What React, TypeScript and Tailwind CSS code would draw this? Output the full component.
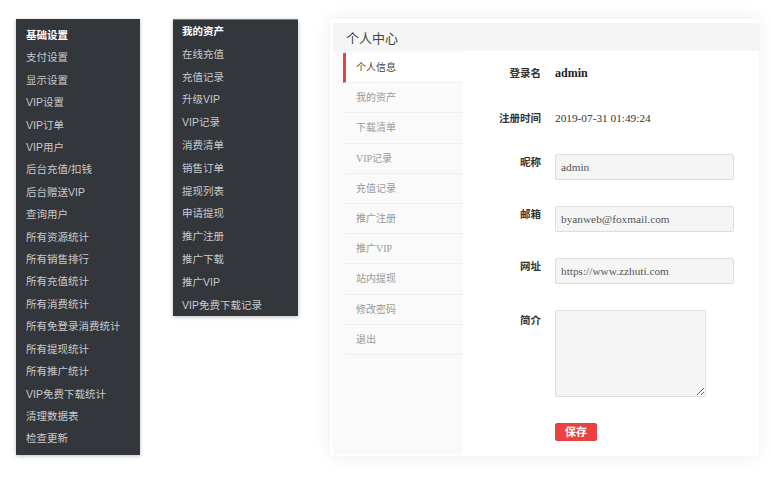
const adminMenu = [
  "基础设置",
  "支付设置",
  "显示设置",
  "VIP设置",
  "VIP订单",
  "VIP用户",
  "后台充值/扣钱",
  "后台赠送VIP",
  "查询用户",
  "所有资源统计",
  "所有销售排行",
  "所有充值统计",
  "所有消费统计",
  "所有免登录消费统计",
  "所有提现统计",
  "所有推广统计",
  "VIP免费下载统计",
  "清理数据表",
  "检查更新",
];

const assetMenu = [
  "我的资产",
  "在线充值",
  "充值记录",
  "升级VIP",
  "VIP记录",
  "消费清单",
  "销售订单",
  "提现列表",
  "申请提现",
  "推广注册",
  "推广下载",
  "推广VIP",
  "VIP免费下载记录",
];

const userMenu = [
  "个人信息",
  "我的资产",
  "下载清单",
  "VIP记录",
  "充值记录",
  "推广注册",
  "推广VIP",
  "站内提现",
  "修改密码",
  "退出",
];

const serif = "font-['Liberation_Serif','Noto_Sans_CJK_SC',serif]";

export default function App() {
  return (
    <div className="min-h-[482px] w-[771px] bg-white font-['Liberation_Sans','Noto_Sans_CJK_SC',sans-serif]">
      <div className="flex items-start pl-[16px] pt-[19px]">
        {/* admin menu */}
        <div className="w-[124px] bg-[#33363b] py-[5px] pl-[10px] shadow-[0_1px_4px_rgba(0,0,0,0.25)]">
          {adminMenu.map((item, i) => (
            <div
              key={i}
              className={`text-[10.5px] leading-[22.4px] ${
                i === 0 ? "font-bold text-white" : "text-[#c9cacc]"
              }`}
            >
              {item}
            </div>
          ))}
        </div>

        {/* assets menu */}
        <div className="ml-[33px] w-[125px] border-t border-[#3a8fd6] bg-[#33363b] pl-[9px] shadow-[0_1px_4px_rgba(0,0,0,0.25)]">
          {assetMenu.map((item, i) => (
            <div
              key={i}
              className={`text-[10.5px] leading-[22.8px] ${
                i === 0 ? "font-bold text-white" : "text-[#c9cacc]"
              }`}
            >
              {item}
            </div>
          ))}
        </div>

        {/* user center */}
        <div className={`ml-[32px] flex h-[437px] w-[429px] flex-col bg-white pl-[3px] pt-[4px] pb-[1px] shadow-[0_0_16px_rgba(0,0,0,0.08)] ${serif}`}>
          <div className="flex h-[28px] items-center bg-[#f5f5f5] pl-[13px] pt-[2px] font-['Noto_Sans_CJK_SC',sans-serif] text-[13px] text-[#444]">
            个人中心
          </div>

          <div className="flex flex-1">
            <div className="w-[130px] bg-[#fafafa] pl-[10px] pt-[2px]">
              {userMenu.map((item, i) => (
                <div
                  key={i}
                  className={`flex h-[30.2px] items-center border-b border-[#efefef] text-[10px] ${
                    i === 0
                      ? "border-l-[3px] border-l-[#e8403f] bg-white pl-[10px] text-[#444]"
                      : "ml-[2px] pl-[11px] text-[#999]"
                  }`}
                >
                  {item}
                </div>
              ))}
            </div>

            <div className="flex flex-1 flex-col pt-[12px]">
              <div className="flex h-[20px] items-center">
                <div className="w-[78px] text-right font-['Noto_Sans_CJK_SC',sans-serif] text-[10.5px] font-bold text-[#333]">
                  登录名
                </div>
                <div className="ml-[14px] text-[12px] font-bold text-[#222]">admin</div>
              </div>

              <div className="mt-[25px] flex h-[20px] items-center">
                <div className="w-[78px] text-right font-['Noto_Sans_CJK_SC',sans-serif] text-[10.5px] font-bold text-[#333]">
                  注册时间
                </div>
                <div className="ml-[14px] text-[11.3px] text-[#333]">2019-07-31 01:49:24</div>
              </div>

              {[
                ["昵称", "admin"],
                ["邮箱", "byanweb@foxmail.com"],
                ["网址", "https://www.zzhuti.com"],
              ].map(([label, value]) => (
                <div key={label} className="mt-[26px] flex items-start">
                  <div className="w-[78px] text-right font-['Noto_Sans_CJK_SC',sans-serif] text-[10.5px] font-bold leading-[16px] text-[#333]">
                    {label}
                  </div>
                  <input
                    readOnly
                    defaultValue={value}
                    className="ml-[14px] h-[26px] w-[179px] rounded-[2px] border border-[#dedede] bg-[#f5f5f5] px-[5px] text-[11.3px] text-[#555] outline-none"
                  />
                </div>
              ))}

              <div className="mt-[26px] flex items-start">
                <div className="w-[78px] text-right font-['Noto_Sans_CJK_SC',sans-serif] text-[10.5px] font-bold leading-[20px] text-[#333]">
                  简介
                </div>
                <textarea
                  readOnly
                  className="ml-[14px] h-[87px] w-[151px] rounded-[2px] border border-[#dedede] bg-[#f5f5f5] outline-none"
                />
              </div>

              <div className="mt-[26px] flex">
                <button className="ml-[92px] flex h-[18px] w-[42px] items-center justify-center rounded-[2px] bg-[#ec4141] text-[11px] font-bold text-white">
                  保存
                </button>
              </div>
            </div>
          </div>
        </div>
      </div>
    </div>
  );
}
